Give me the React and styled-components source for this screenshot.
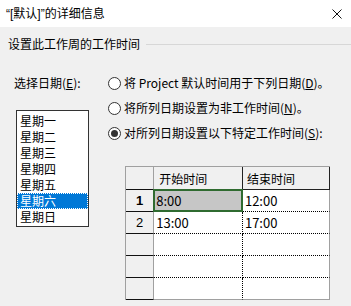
import React from 'react';
import styled, { createGlobalStyle } from 'styled-components';

const Global = createGlobalStyle`
  html, body { margin: 0; padding: 0; background: #f0f0f0; }
  body {
    font-family: "Noto Sans CJK SC", "Microsoft YaHei", sans-serif;
    font-size: 12px;
    color: #000;
  }
`;

const Window = styled.div`
  width: 351px;
  height: 306px;
  overflow: hidden;
  background: #f0f0f0;
  display: flex;
  flex-direction: column;
`;

const TitleBar = styled.div`
  height: 27px;
  flex-shrink: 0;
  background: #fff;
  display: flex;
  align-items: center;
  justify-content: space-between;
  padding: 0 9px 0 6px;
  line-height: 16px;
`;

const Latin = styled.span`
  font-family: "Liberation Sans", Arial, sans-serif;
`;

const SectionHeader = styled.div`
  margin-top: 9px;
  padding-left: 8px;
  height: 16px;
  line-height: 16px;
  display: flex;
  align-items: center;
  gap: 6px;
`;

const Rule = styled.div`
  flex: 1;
  height: 1px;
  background: #d7d7d7;
`;

const Main = styled.div`
  margin-top: 23px;
  display: flex;
`;

const LeftCol = styled.div`
  width: 108px;
  box-sizing: border-box;
  padding-left: 14px;
  display: flex;
  flex-direction: column;
`;

const Label = styled.div`
  line-height: 16px;
  height: 16px;
`;

const ListBox = styled.div`
  margin: 19px 0 0 2px;
  width: 73px;
  box-sizing: border-box;
  border: 1px solid #333;
  background: #fff;
  padding: 2px 0 1px;
`;

const ListItem = styled.div`
  height: 16px;
  line-height: 16px;
  padding-left: 3px;
  background: ${p => (p.$selected ? '#0078d7' : 'transparent')};
  color: ${p => (p.$selected ? '#fff' : '#000')};
  outline: ${p => (p.$selected ? '1px dotted #ffffff' : 'none')};
  outline-offset: -1px;
`;

const RightCol = styled.div`
  display: flex;
  flex-direction: column;
  gap: 9px;
`;

const RadioRow = styled.div`
  display: flex;
  align-items: center;
  gap: 3px;
  height: 16px;
  line-height: 16px;
  white-space: nowrap;
`;

const RadioCircle = styled.span`
  width: 13px;
  height: 13px;
  box-sizing: border-box;
  border: 1px solid #333;
  border-radius: 50%;
  background: #fff;
  display: flex;
  align-items: center;
  justify-content: center;
  &::after {
    content: '';
    width: 7px;
    height: 7px;
    border-radius: 50%;
    background: ${p => (p.$checked ? '#333' : 'transparent')};
  }
`;

const U = styled.span`
  text-decoration: underline;
`;

const Grid = styled.table`
  margin: 16px 0 0 17px;
  border-collapse: separate;
  border-spacing: 0;
  border-left: 1px solid #a0a0a0;
  border-top: 1px solid #a0a0a0;
  table-layout: fixed;
`;

const RowHead = styled.td`
  width: 27px;
  padding: 0;
  height: ${p => (p.$header ? '22px' : '21px')};
  background: #f0f0f0;
  border-right: 1px solid #a0a0a0;
  border-bottom: 1px solid #111;
  text-align: center;
  font-family: "Liberation Sans", Arial, sans-serif;
  font-size: 13px;
  font-weight: ${p => (p.$bold ? 'bold' : 'normal')};
`;

const HeadCell = styled.td`
  width: ${p => p.$w}px;
  padding: 0 0 0 ${p => p.$pad}px;
  box-sizing: content-box;
  height: 22px;
  background: #f0f0f0;
  border-right: 1px solid #222;
  border-bottom: 1px solid #222;
  white-space: nowrap;
`;

const DataCell = styled.td`
  position: relative;
  width: ${p => p.$w}px;
  padding: 0 0 0 2px;
  height: 21px;
  background: ${p => (p.$active ? '#c6c6c6' : '#fff')};
  border-right: ${p => (p.$last ? '1px solid #a0a0a0' : '1px dotted #000')};
  border-bottom: ${p => (p.$bottom ? '1px solid #a0a0a0' : '1px dotted #000')};
  font-size: 13px;
  white-space: nowrap;
  &::after {
    content: '';
    display: ${p => (p.$active ? 'block' : 'none')};
    position: absolute;
    left: -1px;
    top: -1px;
    right: -1px;
    bottom: -1px;
    border: 2px solid #2f6b30;
  }
`;

const days = ['星期一', '星期二', '星期三', '星期四', '星期五', '星期六', '星期日'];
const rows = [
  ['1', '8:00', '12:00'],
  ['2', '13:00', '17:00'],
  ['', '', ''],
  ['', '', ''],
  ['', '', ''],
];

export default function App() {
  return (
    <>
      <Global />
      <Window>
        <TitleBar>
          <span><Latin>“[</Latin>默认<Latin>]”</Latin>的详细信息</span>
          <svg width="10" height="10" viewBox="0 0 10 10">
            <path d="M0.5 0.5 L9.5 9.5 M9.5 0.5 L0.5 9.5" stroke="#111" strokeWidth="1" />
          </svg>
        </TitleBar>
        <SectionHeader>
          <span>设置此工作周的工作时间</span>
          <Rule />
        </SectionHeader>
        <Main>
          <LeftCol>
            <Label>选择日期(<U>E</U>):</Label>
            <ListBox>
              {days.map(d => (
                <ListItem key={d} $selected={d === '星期六'}>{d}</ListItem>
              ))}
            </ListBox>
          </LeftCol>
          <RightCol>
            <RadioRow>
              <RadioCircle />
              <span>将 Project 默认时间用于下列日期(<U>D</U>)。</span>
            </RadioRow>
            <RadioRow>
              <RadioCircle />
              <span>将所列日期设置为非工作时间(<U>N</U>)。</span>
            </RadioRow>
            <RadioRow>
              <RadioCircle $checked />
              <span>对所列日期设置以下特定工作时间(<U>S</U>):</span>
            </RadioRow>
            <Grid>
              <tbody>
                <tr>
                  <RowHead $header />
                  <HeadCell $w={82} $pad={5}>开始时间</HeadCell>
                  <HeadCell $w={81} $pad={4}>结束时间</HeadCell>
                </tr>
                {rows.map((r, i) => (
                  <tr key={i}>
                    <RowHead $bold={i === 0}>{r[0]}</RowHead>
                    <DataCell $w={85} $active={i === 0} $bottom={i === rows.length - 1}>{r[1]}</DataCell>
                    <DataCell $w={83} $last $bottom={i === rows.length - 1}>{r[2]}</DataCell>
                  </tr>
                ))}
              </tbody>
            </Grid>
          </RightCol>
        </Main>
      </Window>
    </>
  );
}
